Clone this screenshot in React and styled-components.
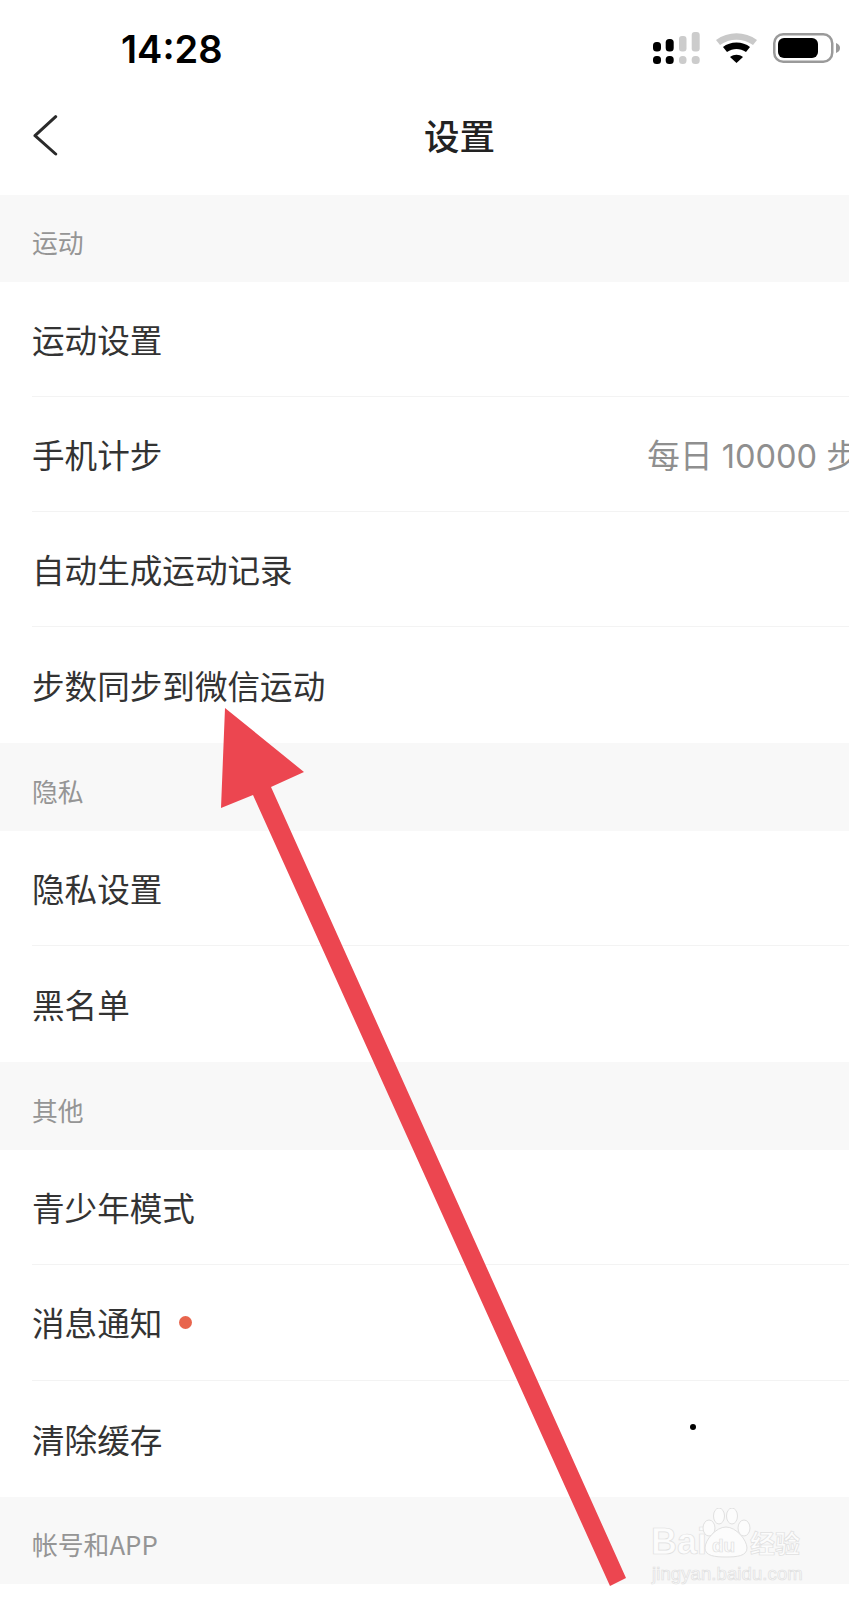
import React from "react";
import styled, { createGlobalStyle } from "styled-components";

const Global = createGlobalStyle`
  html, body { margin: 0; padding: 0; background: #fff; }
  body { font-family: "Noto Sans CJK SC", "Noto Sans", sans-serif; }
`;

const Page = styled.div`
  position: relative;
  width: 849px;
  height: 1600px;
  overflow: hidden;
  background: #fff;
`;

const StatusBar = styled.div`
  height: 98px;
  display: flex;
  align-items: center;
  justify-content: space-between;
  padding: 0 9px 0 121px;
  box-sizing: border-box;
`;

const Clock = styled.div`
  font-family: "Inter", "Liberation Sans", sans-serif;
  font-weight: 600;
  font-size: 38px;
  line-height: 1;
  color: #000;
`;

const NavBar = styled.div`
  height: 97px;
  position: relative;
  display: flex;
  align-items: center;
  justify-content: center;
  padding: 0 0 24px 70px;
  box-sizing: border-box;
`;

const BackIcon = styled.svg`
  position: absolute;
  left: 32px;
  top: 16px;
`;

const Title = styled.div`
  font-size: 35.5px;
  font-weight: 500;
  color: #222;
  line-height: 1;
`;

const SectionHeader = styled.div`
  height: ${(p) => p.$h}px;
  background: #f8f8f8;
  padding: 6px 0 0 32px;
  box-sizing: border-box;
  display: flex;
  align-items: center;
  font-size: 25.8px;
  font-weight: 400;
  color: #959595;
`;

const Row = styled.div`
  height: ${(p) => p.$h || 115}px;
  margin-left: 32px;
  padding-bottom: 2px;
  display: flex;
  align-items: center;
  box-sizing: border-box;
  white-space: nowrap;
  font-size: 32.6px;
  color: #333;
  border-bottom: ${(p) => (p.$last ? "none" : "1px solid #f3f3f3")};
`;

const Value = styled.span`
  margin-left: 485px;
  color: #8f8f8f;
  font-family: "Inter", "Noto Sans CJK SC", sans-serif;
  font-size: 32.6px;
`;

const Dot = styled.span`
  width: 13px;
  height: 13px;
  border-radius: 50%;
  background: #e8654d;
  margin: 2px 0 0 17px;
`;

const Speck = styled.span`
  position: absolute;
  left: 690px;
  top: 1424px;
  width: 6px;
  height: 6px;
  border-radius: 50%;
  background: #000;
`;

const ArrowSvg = styled.svg`
  position: absolute;
  left: 0;
  top: 0;
`;

const Watermark = styled.div`
  position: absolute;
  left: 651px;
  top: 1505px;
  width: 160px;
  height: 88px;
  color: #fcfcfc;
  font-family: "Liberation Sans", sans-serif;
  -webkit-text-stroke: 0.7px #e0e0e0;
`;

const Bai = styled.span`
  position: absolute;
  left: 0;
  top: 19px;
  font-size: 36px;
  font-weight: 700;
  line-height: 1;
`;

const Du = styled.span`
  position: absolute;
  left: 61px;
  top: 31px;
  font-size: 19px;
  font-weight: 700;
  line-height: 1;
`;

const Jing = styled.span`
  position: absolute;
  left: 99px;
  top: 25px;
  font-family: "Noto Sans CJK SC", sans-serif;
  font-size: 25px;
  font-weight: 700;
  line-height: 1;
`;

const Url = styled.span`
  position: absolute;
  left: 1px;
  top: 60px;
  font-size: 18.5px;
  line-height: 1;
  letter-spacing: 0.1px;
`;

const PawSvg = styled.svg`
  position: absolute;
  left: 50px;
  top: 3px;
`;

const StatusIcons = styled.div`
  display: flex;
  align-items: center;
  gap: 16px;
  margin-bottom: 2px;
`;

const SignalIcon = () => (
  <svg width="47" height="32" viewBox="0 0 47 32">
    <rect x="0" y="10" width="8" height="9.5" rx="3.5" fill="#000" />
    <rect x="12.7" y="7" width="8" height="12.5" rx="3.5" fill="#000" />
    <rect x="26" y="4" width="7.5" height="15.5" rx="3" fill="#ccc" />
    <rect x="38.7" y="0" width="8" height="19.5" rx="3" fill="#ccc" />
    <rect x="0" y="24" width="8" height="8" rx="3.5" fill="#000" />
    <rect x="12.7" y="24" width="8" height="8" rx="3.5" fill="#000" />
    <rect x="26" y="24" width="7.5" height="8" rx="3.5" fill="#ccc" />
    <rect x="38.7" y="24" width="8" height="8" rx="3.5" fill="#ccc" />
  </svg>
);

const WifiIcon = () => (
  <svg width="41" height="30" viewBox="0 0 41 30">
    <path d="M0 7 C12 -2 29 -2 41 7 L37 12 C27 5 14 5 4 12 Z" fill="#c9c9c9" />
    <path d="M7 14 C14 8 27 8 34 14 L30 19 C24 15 17 15 11 19 Z" fill="#000" />
    <path d="M14 24 C18 21 23 21 27 24 L20.5 30 Z" fill="#000" />
  </svg>
);

const BatteryIcon = () => (
  <svg width="67" height="30" viewBox="0 0 67 30">
    <rect x="1.25" y="1.25" width="58" height="27.5" rx="9" fill="none" stroke="#9a9a9a" strokeWidth="2.5" />
    <rect x="5" y="5" width="40" height="20" rx="6" fill="#000" />
    <path d="M63 10 C66 11 67 13 67 15 C67 17 66 19 63 20 Z" fill="#9a9a9a" />
  </svg>
);

const rows1 = ["运动设置", "手机计步", "自动生成运动记录", "步数同步到微信运动"];

export default function App() {
  return (
    <Page>
      <Global />
      <StatusBar>
        <Clock>14:28</Clock>
        <StatusIcons>
          <SignalIcon />
          <WifiIcon />
          <BatteryIcon />
        </StatusIcons>
      </StatusBar>
      <NavBar>
        <BackIcon width="26" height="42" viewBox="0 0 26 42">
          <path d="M23.7 2.7 L3 21.7 L23.7 40" fill="none" stroke="#2a2a2a" strokeWidth="3" strokeLinecap="round" strokeLinejoin="round" />
        </BackIcon>
        <Title>设置</Title>
      </NavBar>
      <SectionHeader $h={87}>运动</SectionHeader>
      <Row>{rows1[0]}</Row>
      <Row>
        {rows1[1]}
        <Value>每日 10000 步</Value>
      </Row>
      <Row>{rows1[2]}</Row>
      <Row $h={116} $last>{rows1[3]}</Row>
      <SectionHeader $h={88}>隐私</SectionHeader>
      <Row>隐私设置</Row>
      <Row $h={116} $last>黑名单</Row>
      <SectionHeader $h={88}>其他</SectionHeader>
      <Row>青少年模式</Row>
      <Row $h={116}>
        消息通知
        <Dot />
      </Row>
      <Row $h={116} $last>清除缓存</Row>
      <SectionHeader $h={87}>帐号和APP</SectionHeader>
      <Speck />
      <ArrowSvg width="849" height="1600" viewBox="0 0 849 1600">
        <polygon points="225,708 304,772 271,787 626,1578 610,1586 253,795 221,808" fill="#ec4650" />
      </ArrowSvg>
      <Watermark>
        <Bai>Bai</Bai>
        <PawSvg width="50" height="50" viewBox="0 0 50 50">
          <g fill="#fcfcfc" stroke="#e0e0e0" strokeWidth="1">
            <ellipse cx="8" cy="20" rx="6" ry="8" />
            <ellipse cx="18" cy="8" rx="5.5" ry="8" />
            <ellipse cx="31" cy="8" rx="5.5" ry="8" />
            <ellipse cx="43" cy="20" rx="6" ry="8" />
            <path d="M25 19 C15 19 4 32 4 40 C4 48 14 49 25 49 C36 49 46 48 46 40 C46 32 35 19 25 19 Z" />
          </g>
        </PawSvg>
        <Du>du</Du>
        <Jing>经验</Jing>
        <Url>jingyan.baidu.com</Url>
      </Watermark>
    </Page>
  );
}
